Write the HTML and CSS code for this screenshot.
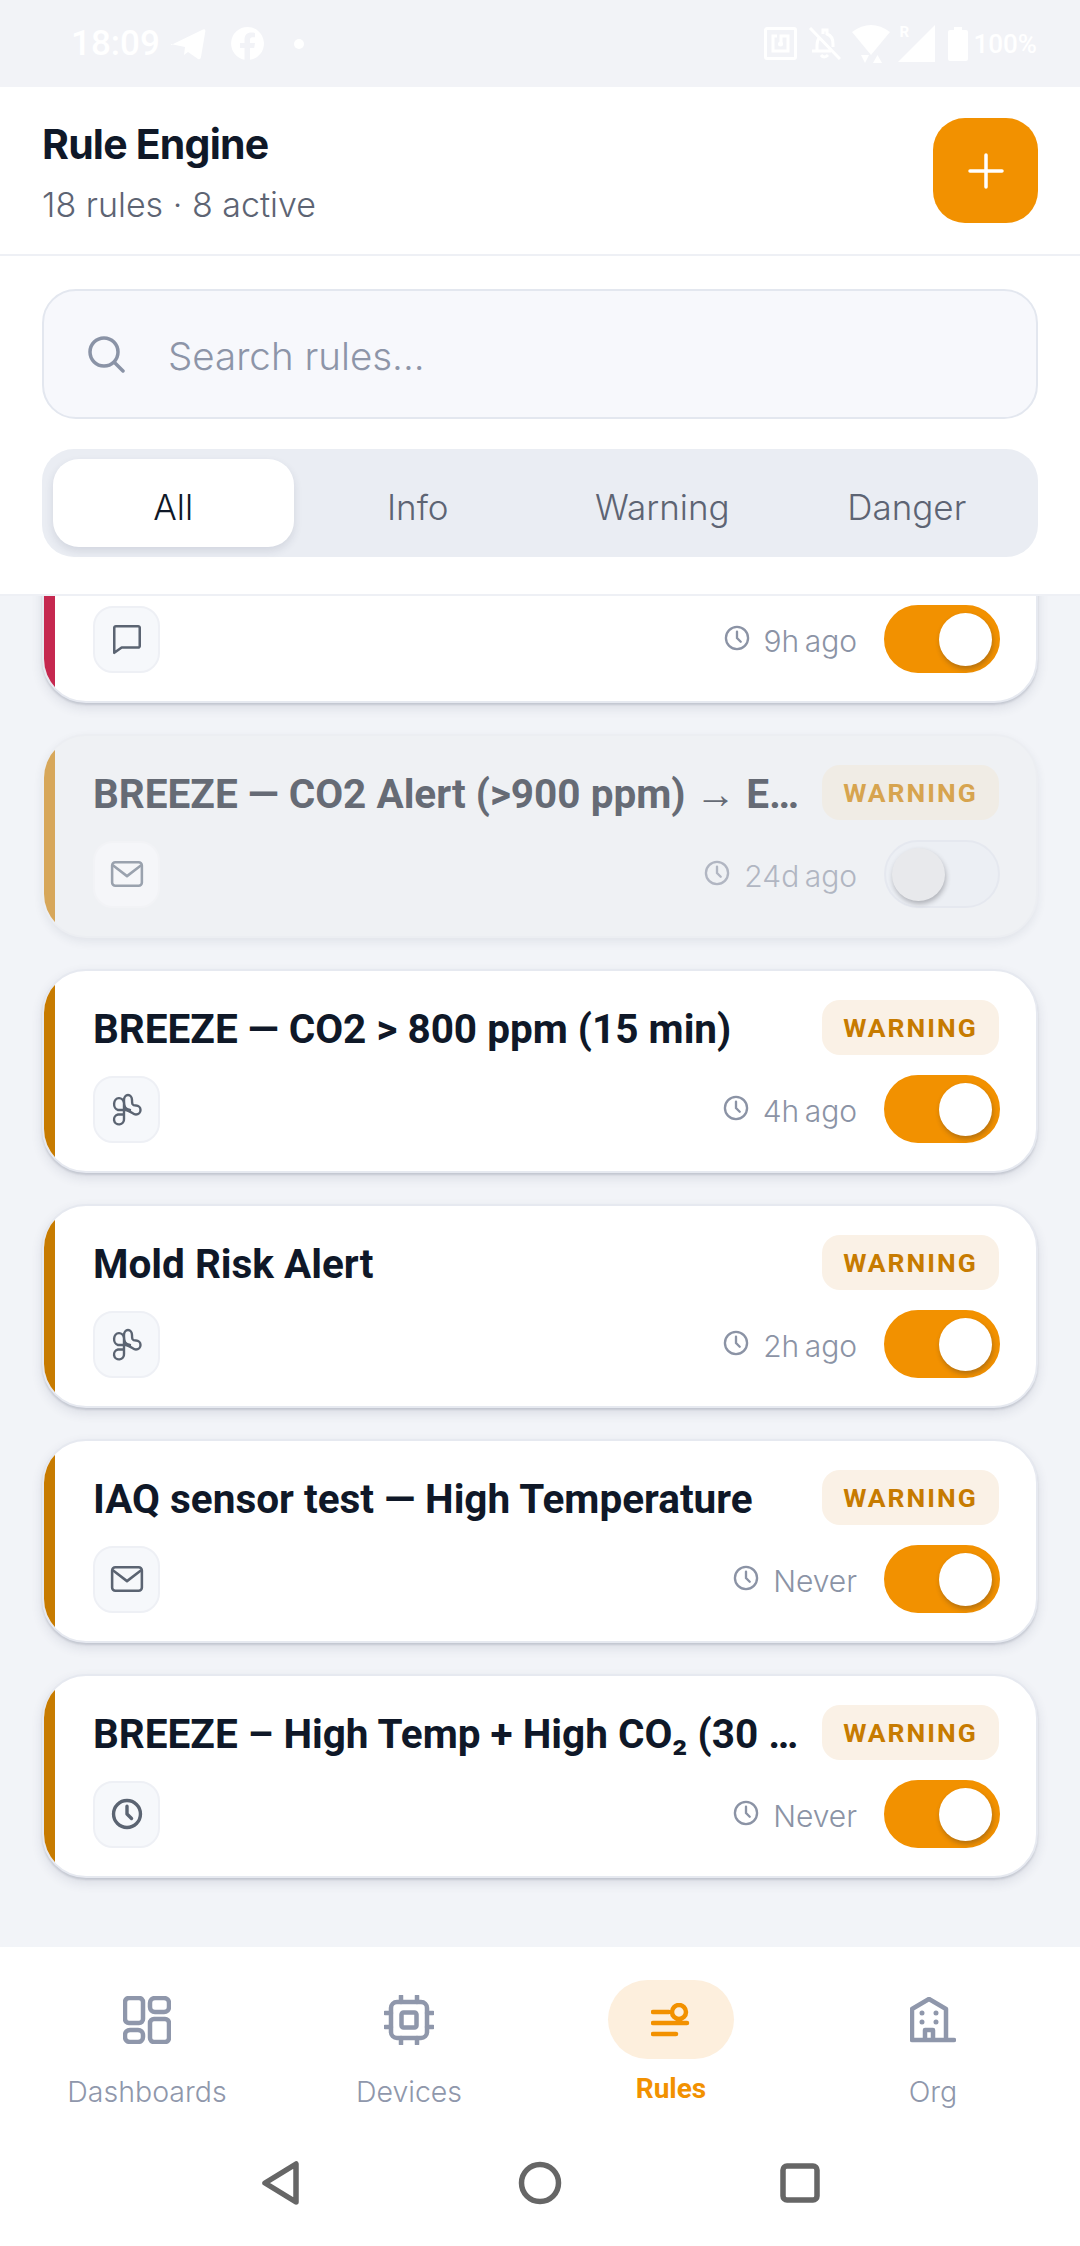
FILE: index.html
```html
<!DOCTYPE html>
<html lang="en">
  <head>
    <meta charset="UTF-8" />
    <title>Rule Engine</title>
    <link rel="stylesheet" href="styles.css">
  </head>
  <body>
    <svg class="defs" width="0" height="0">
      <symbol id="i-clock" viewBox="0 0 24 24"><circle cx="12" cy="12" r="9.5"/><path d="M12 6.5V12l3.2 3.2"/></symbol>
      <symbol id="i-mail" viewBox="0 0 32 32"><rect x="2" y="5" width="28" height="22" rx="3"/><path d="M3 8l13 10L29 8"/></symbol>
      <symbol id="i-msg" viewBox="0 0 32 32"><path d="M4 5.5a1.5 1.5 0 0 1 1.5-1.5h21A1.5 1.5 0 0 1 28 5.500v17a1.500 1.500 0 0 1-1.500 1.500H11l-7 5z"/></symbol>
      <symbol id="i-fan" viewBox="0 0 34 34"><path d="M20 18C15 17 14 15 14 8A4 5 0 0 1 22 8C22 12 22 13.500 26 13.500A4.500 4.500 0 0 1 26 22.500C23 22.500 21 19 16 18H8A5 6 0 1 1 14 11V27A5 5 0 1 1 8 22.500H13"/></symbol>
    </svg>

    <div class="app">
      <div class="status-bar">
        <div class="status-left">
          <span class="status-time">18:09</span>
          <svg class="st-telegram" width="36" height="32" viewBox="0 0 36 32"><path d="M1 17 33 1.500q2.500-1 2.400 1.500L31 29q-.6 3-3 2l-10-7-4 3 1-8-12-2.500q-3-.8-2-1.500z"/></svg>
          <svg class="st-fb" width="33" height="33" viewBox="0 0 33 33"><path d="M16.500 0a16.500 16.500 0 0 0-3 32.700V21H9v-5h4.500v-3.500c0-4.500 2.700-7 6.800-7 1.300 0 2.700.2 3.700.4v4.300h-2.300c-2.200 0-2.700 1.300-2.700 2.700V16H24l-.8 5h-4.200v11.800A16.500 16.500 0 0 0 16.500 0z"/></svg>
          <span class="st-dot"></span>
        </div>
        <div class="status-right">
          <svg class="st-nfc" width="33" height="33" viewBox="0 0 33 33"><path d="M3 1.500h27A1.500 1.500 0 0 1 31.500 3v27a1.500 1.500 0 0 1-1.500 1.500H3A1.500 1.500 0 0 1 1.500 30V3A1.500 1.500 0 0 1 3 1.500z"/><path d="M17 16V9h7v15H9V9h4"/><circle class="st-fill" cx="16.500" cy="17" r="2.500"/></svg>
          <svg class="st-bell" width="33" height="33" viewBox="0 0 33 33"><path d="M2 1l30 31M12 10q-3 3-3 8v6H4m5 0h14M25 20v-3q0-8-6-10V3h-4v4M13 28q3 4 7 0"/></svg>
          <svg class="st-wifi" width="38" height="40" viewBox="0 0 38 40"><path d="M0 8Q19-6 38 8L19 31z"/><path d="M9 31h8l-4 8zM21 39l4.500-8 4.500 8z"/></svg>
          <span class="st-signal">
            <span class="st-r">R</span>
            <svg width="37" height="37" viewBox="0 0 37 37"><path d="M37 0v37H0z"/></svg>
          </span>
          <svg class="st-battery" width="20" height="34" viewBox="0 0 20 34"><path d="M6 0h8v3h4q2 0 2 2v27q0 2-2 2H2q-2 0-2-2V5q0-2 2-2h4z"/></svg>
          <span class="status-pct">100%</span>
        </div>
      </div>

      <header class="page-header">
        <div>
          <h1>Rule Engine</h1>
          <p>18 rules · 8 active</p>
        </div>
        <button class="add-btn" aria-label="Add rule">
          <svg width="36" height="36" viewBox="0 0 36 36"><path d="M18 2v32M2 18h32"/></svg>
        </button>
      </header>

      <section class="filters">
        <div class="search">
          <svg width="38" height="38" viewBox="0 0 38 38"><circle cx="17" cy="17" r="14"/><path d="M27.500 27.500 36 36"/></svg>
          <span>Search rules...</span>
        </div>
        <div class="segments">
          <button class="active">All</button>
          <button>Info</button>
          <button>Warning</button>
          <button>Danger</button>
        </div>
      </section>

      <main class="rule-list">
        <article class="card danger scrolled">
          <div class="stripe"></div>
          <div class="card-body">
            <div class="card-row">
              <span class="channel"><svg><use href="#i-msg"/></svg></span>
              <span class="last-run"><svg><use href="#i-clock"/></svg>9h ago</span>
              <span class="toggle on"><i></i></span>
            </div>
          </div>
        </article>

        <article class="card off">
          <div class="stripe"></div>
          <div class="card-body">
            <div class="card-row card-top">
              <h3>BREEZE — CO2 Alert (&gt;900 ppm) → Email team</h3>
              <span class="badge">WARNING</span>
            </div>
            <div class="card-row">
              <span class="channel"><svg><use href="#i-mail"/></svg></span>
              <span class="last-run"><svg><use href="#i-clock"/></svg>24d ago</span>
              <span class="toggle"><i></i></span>
            </div>
          </div>
        </article>

        <article class="card">
          <div class="stripe"></div>
          <div class="card-body">
            <div class="card-row card-top">
              <h3>BREEZE — CO2 &gt; 800 ppm (15 min)</h3>
              <span class="badge">WARNING</span>
            </div>
            <div class="card-row">
              <span class="channel"><svg><use href="#i-fan"/></svg></span>
              <span class="last-run"><svg><use href="#i-clock"/></svg>4h ago</span>
              <span class="toggle on"><i></i></span>
            </div>
          </div>
        </article>

        <article class="card">
          <div class="stripe"></div>
          <div class="card-body">
            <div class="card-row card-top">
              <h3>Mold Risk Alert</h3>
              <span class="badge">WARNING</span>
            </div>
            <div class="card-row">
              <span class="channel"><svg><use href="#i-fan"/></svg></span>
              <span class="last-run"><svg><use href="#i-clock"/></svg>2h ago</span>
              <span class="toggle on"><i></i></span>
            </div>
          </div>
        </article>

        <article class="card">
          <div class="stripe"></div>
          <div class="card-body">
            <div class="card-row card-top">
              <h3>IAQ sensor test — High Temperature</h3>
              <span class="badge">WARNING</span>
            </div>
            <div class="card-row">
              <span class="channel"><svg><use href="#i-mail"/></svg></span>
              <span class="last-run"><svg><use href="#i-clock"/></svg>Never</span>
              <span class="toggle on"><i></i></span>
            </div>
          </div>
        </article>

        <article class="card">
          <div class="stripe"></div>
          <div class="card-body">
            <div class="card-row card-top">
              <h3>BREEZE – High Temp + High CO₂ (30 min sustained)</h3>
              <span class="badge">WARNING</span>
            </div>
            <div class="card-row">
              <span class="channel"><svg><use href="#i-clock"/></svg></span>
              <span class="last-run"><svg><use href="#i-clock"/></svg>Never</span>
              <span class="toggle on"><i></i></span>
            </div>
          </div>
        </article>
      </main>

      <footer class="bottom">
        <nav class="tabbar">
          <div class="tab">
            <span class="tab-icon">
              <svg width="48" height="48" viewBox="0 0 48 48"><rect x="2" y="2" width="18" height="25" rx="4"/><rect x="27" y="2" width="19" height="14" rx="5"/><rect x="2" y="34" width="18" height="12" rx="5"/><rect x="27" y="23" width="19" height="23" rx="4"/></svg>
            </span>
            <span class="tab-label">Dashboards</span>
          </div>
          <div class="tab">
            <span class="tab-icon">
              <svg width="50" height="50" viewBox="0 0 50 50"><rect x="7" y="7" width="36" height="36" rx="6"/><rect x="17.500" y="17.500" width="15" height="15" rx="2"/><path d="M17 1v6M33 1v6M17 43v6M33 43v6M1 18h6M1 32h6M43 18h6M43 32h6"/></svg>
            </span>
            <span class="tab-label">Devices</span>
          </div>
          <div class="tab current">
            <span class="tab-icon">
              <svg width="40" height="34" viewBox="0 0 40 34"><path d="M2 9h16M2 20h34M2 31h23"/><circle cx="28" cy="9" r="7"/></svg>
            </span>
            <span class="tab-label">Rules</span>
          </div>
          <div class="tab">
            <span class="tab-icon">
              <svg width="46" height="46" viewBox="0 0 46 46"><path d="M2 43V12L19 2l17 10v31M2 43h42M15 43V33h8v10"/><path class="dots" d="M12 16v.1M26 16v.1M12 25v.1M26 25v.1"/></svg>
            </span>
            <span class="tab-label">Org</span>
          </div>
        </nav>
        <div class="system-nav">
          <svg width="38" height="44" viewBox="0 0 38 44"><path d="M34 3v38L3 22z"/></svg>
          <svg width="44" height="44" viewBox="0 0 44 44"><circle cx="22" cy="22" r="18.500"/></svg>
          <svg width="40" height="40" viewBox="0 0 40 40"><rect x="3" y="3" width="34" height="34" rx="4"/></svg>
        </div>
      </footer>
    </div>
  </body>
</html>
```

FILE: styles.css
```css
* {
  box-sizing: border-box;
}
body {
  margin: 0;
  font-family: Inter, "Noto Sans", sans-serif;
  color: #0f1828;
}
h1,
h3,
p {
  margin: 0;
}
button {
  font-family: inherit;
  border: none;
  background: none;
  padding: 0;
}
.defs {
  position: absolute;
}
.app {
  width: 1080px;
  height: 2246px;
  display: flex;
  flex-direction: column;
  background: #f2f4f8;
  overflow: hidden;
}

/* status bar */
.status-bar {
  height: 87px;
  flex: none;
  display: flex;
  justify-content: space-between;
  align-items: center;
  padding: 0 43px 0 71px;
  background: #f2f3f7;
  color: #fff;
  font-family: Roboto, sans-serif;
}
.status-bar svg {
  fill: #fff;
  display: block;
}
.status-left,
.status-right {
  display: flex;
  align-items: center;
}
.status-time {
  font-size: 35px;
  font-weight: 500;
  width: 99px;
}
.st-fb {
  margin-left: 25px;
}
.st-dot {
  width: 10px;
  height: 10px;
  border-radius: 50%;
  background: #fff;
  margin-left: 30px;
}
.status-bar .st-nfc,
.status-bar .st-bell {
  fill: none;
  stroke: #fff;
  stroke-width: 3;
}
.status-bar .st-nfc .st-fill {
  fill: #fff;
  stroke: none;
}
.st-bell {
  margin-left: 11px;
}
.st-wifi {
  margin-left: 11px;
}
.st-signal {
  display: flex;
  margin-left: 8px;
  position: relative;
}
.st-r {
  position: absolute;
  top: -2px;
  left: 2px;
  font-size: 15px;
  font-weight: 700;
}
.st-battery {
  margin-left: 13px;
}
.status-pct {
  font-size: 26px;
  font-weight: 500;
  margin-left: 6px;
}

/* header */
.page-header {
  height: 169px;
  flex: none;
  display: flex;
  justify-content: space-between;
  align-items: center;
  padding: 0 42px;
  background: #fff;
  border-bottom: 2px solid #eef0f5;
}
.page-header h1 {
  font-size: 41px;
  font-weight: 700;
  letter-spacing: -0.8px;
  line-height: 56px;
  margin-top: 4px;
}
.page-header p {
  font-size: 34px;
  color: #5d6473;
  line-height: 50px;
  margin-top: 8px;
  font-weight: 300;
}
.add-btn {
  width: 105px;
  height: 105px;
  border-radius: 32px;
  background: #f29100;
  display: flex;
  align-items: center;
  justify-content: center;
}
.add-btn svg {
  stroke: #fff;
  stroke-width: 3.5;
  stroke-linecap: round;
}

/* search and filter */
.filters {
  height: 340px;
  flex: none;
  padding: 33px 42px 0;
  background: #fff;
  border-bottom: 2px solid #eef0f5;
  position: relative;
  z-index: 1;
}
.search {
  height: 130px;
  display: flex;
  align-items: center;
  gap: 43px;
  padding: 0 43px;
  background: #f7f8fc;
  border: 2px solid #e3e7ef;
  border-radius: 34px;
  font-size: 38.5px;
  font-weight: 300;
  color: #8d95a8;
}
.search span {
  padding-top: 4px;
}
.search svg {
  fill: none;
  stroke: #8a93a6;
  stroke-width: 3.5;
  stroke-linecap: round;
  flex: none;
}
.segments {
  margin-top: 30px;
  height: 108px;
  padding: 10px 11px;
  display: grid;
  grid-template-columns: repeat(4, 1fr);
  gap: 4px;
  background: #eaedf3;
  border-radius: 32px;
}
.segments button {
  font-size: 35px;
  font-weight: 300;
  color: #5d6473;
  border-radius: 26px;
  padding-top: 7px;
}
.segments .active {
  background: #fff;
  color: #0f1828;
  box-shadow: 0 4px 8px rgba(40, 50, 80, 0.12);
}

/* rule cards */
.rule-list {
  flex: 1;
  min-height: 0;
  overflow: hidden;
  padding: 0 42px;
  display: flex;
  flex-direction: column;
  gap: 31px;
}
.card {
  height: 204px;
  flex: none;
  display: flex;
  background: #fff;
  border: 2px solid #e6e9f0;
  border-radius: 44px;
  overflow: hidden;
  box-shadow: 0 5px 12px rgba(40, 50, 80, 0.12), 0 2px 2px rgba(40, 50, 80, 0.14);
}
.card.scrolled {
  margin-top: -97px;
}
.stripe {
  width: 11px;
  flex: none;
  background: #c77b00;
}
.card-body {
  flex: 1;
  min-width: 0;
  padding: 29px 36px 28px 38px;
  display: flex;
  flex-direction: column;
  gap: 20px;
}
.card.scrolled .card-body {
  justify-content: flex-end;
}
.card-row {
  display: flex;
  align-items: center;
}
.card-top {
  height: 55px;
  gap: 12px;
}
.card-top h3 {
  flex: 1;
  min-width: 0;
  font-family: Roboto, sans-serif;
  font-size: 40.5px;
  font-weight: 700;
  white-space: nowrap;
  overflow: hidden;
  text-overflow: ellipsis;
  padding-top: 3px;
}
.badge {
  width: 177px;
  height: 55px;
  flex: none;
  margin-right: 1px;
  display: flex;
  align-items: center;
  justify-content: center;
  border-radius: 18px;
  background: #faf1e6;
  color: #c77b00;
  font-family: Roboto, sans-serif;
  font-size: 26.5px;
  font-weight: 700;
  letter-spacing: 2px;
}
.channel {
  width: 67px;
  height: 67px;
  flex: none;
  display: flex;
  align-items: center;
  justify-content: center;
  background: #f6f8fb;
  border: 2px solid #eef0f5;
  border-radius: 20px;
}
.channel svg {
  width: 34px;
  height: 34px;
  fill: none;
  stroke: #5b6472;
  stroke-width: 2.4;
  stroke-linecap: round;
  stroke-linejoin: round;
}
.last-run {
  margin-left: auto;
  display: flex;
  align-items: center;
  gap: 13px;
  font-size: 30px;
  font-weight: 300;
  word-spacing: -3px;
  color: #8b93a5;
  padding-top: 4px;
}
.last-run svg {
  width: 28px;
  height: 28px;
  margin-top: -7px;
  fill: none;
  stroke: #8b93a5;
  stroke-width: 2;
  stroke-linecap: round;
}
.toggle {
  width: 116px;
  height: 68px;
  flex: none;
  margin-left: 27px;
  padding: 6px;
  border-radius: 34px;
  background: #eceff4;
  border: 2px solid #e5e8ef;
  display: flex;
}
.toggle i {
  width: 53px;
  height: 53px;
  border-radius: 50%;
  background: #e8e9ec;
  box-shadow: 1px 3px 5px rgba(40, 40, 50, 0.3);
}
.toggle.on {
  background: #f29100;
  border-color: #f29100;
  justify-content: flex-end;
}
.toggle.on i {
  background: #fff;
}

/* danger and disabled variants */
.card.danger .stripe {
  background: #c5284f;
}
.card.off {
  background: #eff1f4;
  border-color: #eceef2;
  box-shadow: 0 4px 10px rgba(40, 50, 80, 0.08);
}
.card.off .stripe {
  background: #d7a75a;
}
.card.off h3 {
  color: #666b75;
}
.card.off .badge {
  background: #f0ece5;
  color: #d7a44f;
}
.card.off .channel {
  background: #f5f6f9;
  border-color: #f2f3f6;
}
.card.off .channel svg {
  stroke: #9aa2ae;
}
.card.off .last-run {
  color: #b1b6c2;
}
.card.off .last-run svg {
  stroke: #b1b6c2;
}

/* bottom navigation */
.bottom {
  height: 299px;
  flex: none;
  background: #fff;
}
.tabbar {
  height: 179px;
  padding: 33px 16px 0;
  display: grid;
  grid-template-columns: repeat(4, 1fr);
}
.tab {
  display: flex;
  flex-direction: column;
  align-items: center;
}
.tab-icon {
  width: 126px;
  height: 79px;
  border-radius: 40px;
  display: flex;
  align-items: center;
  justify-content: center;
}
.tab-icon svg {
  fill: none;
  stroke: #8f97ab;
  stroke-width: 4.5;
  stroke-linecap: round;
  stroke-linejoin: round;
}
.tab-icon .dots {
  stroke-width: 5;
}
.tab-label {
  margin-top: 15px;
  font-size: 28.5px;
  font-weight: 300;
  line-height: 36px;
  color: #8f97ab;
}
.tab.current .tab-icon {
  background: #fdefdd;
}
.tab.current .tab-icon svg {
  stroke: #f29100;
}
.tab.current .tab-label {
  margin-top: 12px;
  font-family: Roboto, sans-serif;
  font-size: 28px;
  font-weight: 700;
  color: #f29100;
}
.system-nav {
  height: 120px;
  display: flex;
  justify-content: center;
  align-items: center;
  gap: 218px;
  padding: 0 0 7px 2px;
}
.system-nav svg {
  fill: none;
  stroke: #666;
  stroke-width: 5.5;
  stroke-linejoin: round;
}
```
